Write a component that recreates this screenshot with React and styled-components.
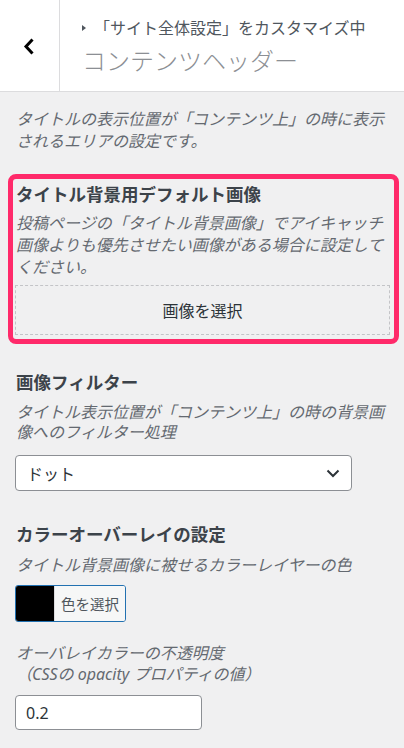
import React from "react";
import styled, { createGlobalStyle } from "styled-components";

const Global = createGlobalStyle`
  html, body { margin: 0; padding: 0; }
  body {
    background: #f0f0f1;
    font-family: "Noto Sans", "Noto Sans CJK JP", sans-serif;
    color: #3c434a;
  }
  * { box-sizing: border-box; }
`;

const Page = styled.div`
  width: 404px;
  height: 748px;
  background: #f0f0f1;
  overflow: hidden;
`;

const Header = styled.div`
  display: flex;
  height: 92px;
  background: #fff;
  border-bottom: 1px solid #dcdcde;
`;

const BackButton = styled.button`
  width: 60px;
  flex: none;
  display: flex;
  align-items: center;
  justify-content: center;
  padding: 2px 2px 0 0;
  background: #fff;
  border: none;
  border-right: 1px solid #dcdcde;
  cursor: pointer;
`;

const TitleArea = styled.div`
  display: flex;
  flex-direction: column;
  padding: 18px 0 0 22px;
`;

const Breadcrumb = styled.div`
  display: flex;
  align-items: center;
  font-size: 16px;
  line-height: 20px;
  color: #50575e;
  white-space: nowrap;
`;

const Caret = styled.span`
  width: 0;
  height: 0;
  border-top: 3px solid transparent;
  border-bottom: 3px solid transparent;
  border-left: 4px solid #50575e;
  margin-right: 8px;
`;

const PanelTitle = styled.h2`
  margin: 8px 0 0 0;
  font-size: 24px;
  line-height: 30px;
  font-weight: 300;
  color: #8c8f94;
  white-space: nowrap;
`;

const Content = styled.div`
  padding: 16px 0 0 0;
`;

const Description = styled.p`
  margin: ${(p) => p.$m || "0"};
  padding: 0 ${(p) => (p.$inset ? "0" : "14px")} 0 ${(p) => (p.$inset ? "1px" : "16px")};
  font-size: 16px;
  line-height: ${(p) => p.$lh || "21px"};
  font-style: italic;
  color: #646970;
`;

const Highlight = styled.div`
  margin: 22px 5px 0 8px;
  border: 5px solid #ff2a6a;
  border-radius: 8px;
  padding: 4px 4px 4px 2px;
`;

const Control = styled.div`
  padding: 0 14px 0 15px;
  margin-top: ${(p) => p.$mt || "0"};
`;

const Heading = styled.h3`
  margin: 0;
  padding-left: 1px;
  font-size: 17.5px;
  line-height: 22px;
  font-weight: 700;
  color: #3c434a;
  white-space: nowrap;
`;

const DashedButton = styled.button`
  display: flex;
  align-items: center;
  justify-content: center;
  width: 100%;
  height: 50px;
  margin-top: 7px;
  background: transparent;
  border: 1px dashed #c3c4c7;
  border-radius: 0;
  font-family: inherit;
  font-size: 16px;
  color: #2c3338;
  cursor: pointer;
`;

const SelectBox = styled.div`
  display: flex;
  align-items: center;
  justify-content: space-between;
  width: 337px;
  height: 36px;
  margin-top: 13px;
  padding: 0 11px 0 11px;
  background: #fff;
  border: 1px solid #8c8f94;
  border-radius: 4px;
  font-size: 16px;
  color: #2c3338;
`;

const ColorButton = styled.div`
  display: flex;
  width: 111px;
  height: 37px;
  margin-top: 9px;
  border: 1px solid #2271b1;
  border-radius: 3px;
  overflow: hidden;
`;

const Swatch = styled.span`
  width: 38px;
  flex: none;
  background: ${(p) => p.$color};
`;

const ColorLabel = styled.span`
  flex: 1;
  display: flex;
  align-items: center;
  justify-content: center;
  background: #f6f7f7;
  border-left: 1px solid #dcdcde;
  font-size: 14.5px;
  color: #50575e;
`;

const TextInput = styled.div`
  display: flex;
  align-items: center;
  width: 187px;
  height: 35px;
  margin-top: 10px;
  padding: 0 10px;
  background: #fff;
  border: 1px solid #8c8f94;
  border-radius: 4px;
  font-size: 16px;
  color: #2c3338;
`;

export default function App() {
  return (
    <Page>
      <Global />
      <Header>
        <BackButton aria-label="戻る">
          <svg width="12" height="17" viewBox="0 0 12 17">
            <path d="M9.5 1.5 L3 8.5 L9.5 15.5" fill="none" stroke="#000" strokeWidth="3" strokeLinejoin="miter" />
          </svg>
        </BackButton>
        <TitleArea>
          <Breadcrumb>
            <Caret />
            「サイト全体設定」をカスタマイズ中
          </Breadcrumb>
          <PanelTitle>コンテンツヘッダー</PanelTitle>
        </TitleArea>
      </Header>
      <Content>
        <Description $lh="22px">
          タイトルの表示位置が「コンテンツ上」の時に表示されるエリアの設定です。
        </Description>

        <Highlight>
          <Heading>タイトル背景用デフォルト画像</Heading>
          <Description $inset $lh="22px" $m="7px 0 0 0">
            投稿ページの「タイトル背景画像」でアイキャッチ画像よりも優先させたい画像がある場合に設定してください。
          </Description>
          <DashedButton>画像を選択</DashedButton>
        </Highlight>

        <Control $mt="27px">
          <Heading>画像フィルター</Heading>
          <Description $inset $lh="20px" $m="9px 0 0 0">
            タイトル表示位置が「コンテンツ上」の時の背景画像へのフィルター処理
          </Description>
          <SelectBox>
            <span>ドット</span>
            <svg width="14" height="9" viewBox="0 0 14 9">
              <path d="M1.5 1.5 L7 7 L12.5 1.5" fill="none" stroke="#2c3338" strokeWidth="2" />
            </svg>
          </SelectBox>
        </Control>

        <Control $mt="32px">
          <Heading>カラーオーバーレイの設定</Heading>
          <Description $inset $lh="21px" $m="10px 0 0 0">
            タイトル背景画像に被せるカラーレイヤーの色
          </Description>
          <ColorButton>
            <Swatch $color="#000" />
            <ColorLabel>色を選択</ColorLabel>
          </ColorButton>
          <Description $inset $lh="21px" $m="21px 0 0 0">
            オーバレイカラーの不透明度
            <br />
            （CSSの opacity プロパティの値）
          </Description>
          <TextInput>0.2</TextInput>
        </Control>
      </Content>
    </Page>
  );
}
